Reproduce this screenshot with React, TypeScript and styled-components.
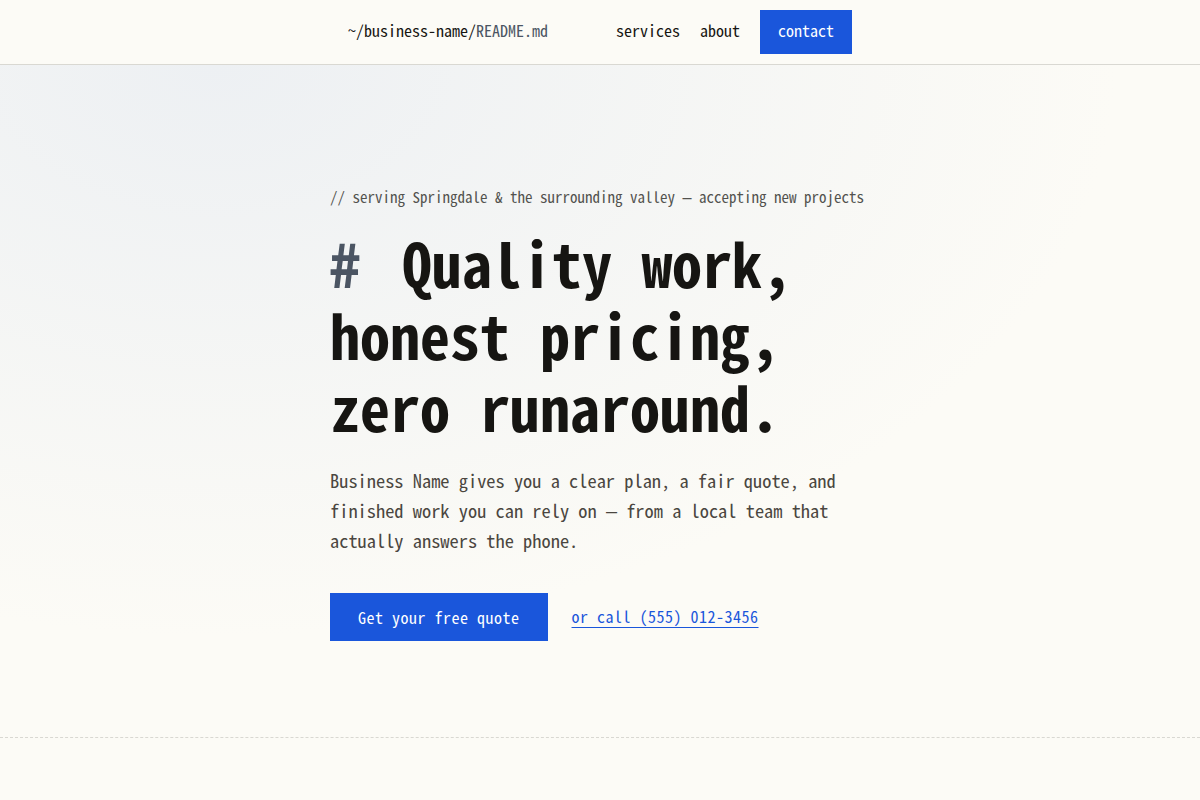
import React from 'react'
import styled, { createGlobalStyle } from 'styled-components'

const GlobalStyle = createGlobalStyle`
    * { box-sizing: border-box; }
    html, body {
        margin: 0;
        padding: 0;
        background: #fcfbf6;
        color: #161512;
        font-family: "Noto Sans Mono CJK JP", "Noto Sans Mono CJK SC", "DejaVu Sans Mono", monospace;
    }
    a { color: inherit; text-decoration: none; }
`

const App = () => {
    return (
        <Page>
            <GlobalStyle />
            <Header>
                <HeaderInner>
                    <Logo href="#">
                        ~/business-name/<LogoFile>README.md</LogoFile>
                    </Logo>
                    <Nav>
                        <NavLink href="#services">services</NavLink>
                        <NavLink href="#about">about</NavLink>
                        <ContactButton href="#contact">contact</ContactButton>
                    </Nav>
                </HeaderInner>
            </Header>
            <Hero>
                <HeroInner>
                    <Eyebrow>
                        // serving Springdale &amp; the surrounding valley <Dash>—</Dash> accepting new projects
                    </Eyebrow>
                    <Headline>
                        <Hash>#</Hash> Quality work, honest pricing, zero runaround.
                    </Headline>
                    <Lead>
                        Business Name gives you a clear plan, a fair quote, and finished work you can rely on <Dash>—</Dash> from a local team that actually answers the phone.
                    </Lead>
                    <Actions>
                        <PrimaryButton href="#contact">Get your free quote</PrimaryButton>
                        <CallLink href="tel:5550123456">or call (555) 012-3456</CallLink>
                    </Actions>
                </HeroInner>
            </Hero>
            <Divider />
            <NextSection />
        </Page>
    )
}

export default App

const Page = styled.div`
    min-height: 800px;
    background: #fcfbf6;
`

const Header = styled.header`
    height: 65px;
    border-bottom: 1px solid #d9d8d2;
    background: #fcfbf6;
`

const HeaderInner = styled.div`
    max-width: 540px;
    height: 100%;
    margin: 0 auto;
    padding: 0 18px;
    display: flex;
    align-items: center;
    justify-content: space-between;
`

const Logo = styled.a`
    font-size: 16px;
    padding-bottom: 4px;
    color: #161512;
`

const LogoFile = styled.span`
    color: #4b5563;
`

const Nav = styled.nav`
    display: flex;
    align-items: center;
    gap: 20px;
`

const NavLink = styled.a`
    font-size: 16px;
    padding-bottom: 4px;
    color: #161512;
`

const ContactButton = styled.a`
    display: inline-block;
    font-size: 16px;
    line-height: 20px;
    padding: 10px 18px 14px;
    background: #1a56db;
    color: #ffffff;
`

const Hero = styled.section`
    height: 672px;
    background:
        radial-gradient(ellipse 75% 85% at 18% 0%, #edf0f3 0%, rgba(237, 240, 243, 0.6) 40%, rgba(252, 251, 246, 0) 100%),
        #fcfbf6;
`

const HeroInner = styled.div`
    max-width: 540px;
    margin: 0 auto;
    padding-top: 122px;
`

const Eyebrow = styled.p`
    margin: 0;
    font-size: 15px;
    line-height: 20px;
    color: #52524e;
`

// the CJK mono face draws a full-width dash; this keeps it one cell wide
const Dash = styled.span`
    font-family: "DejaVu Sans Mono", monospace;
    line-height: 0;
`

const Headline = styled.h1`
    margin: 19px 0 0;
    font-size: 60px;
    line-height: 72px;
    font-weight: 700;
    color: #161512;
`

const Hash = styled.span`
    color: #4b5563;
    margin-right: 12px;
`

const Lead = styled.p`
    margin: 23px 0 0;
    font-size: 18.4px;
    line-height: 30px;
    color: #4a4640;
`

const Actions = styled.div`
    margin-top: 38px;
    display: flex;
    align-items: center;
    gap: 24px;
`

const PrimaryButton = styled.a`
    display: inline-block;
    font-size: 16px;
    line-height: 20px;
    letter-spacing: 0.5px;
    padding: 14px 28px;
    background: #1a56db;
    color: #ffffff;
`

const CallLink = styled.a`
    font-size: 16px;
    letter-spacing: 0.5px;
    padding-bottom: 3px;
    color: #1a56db;
    text-decoration: underline;
    text-underline-offset: 4px;
`

const Divider = styled.hr`
    margin: 0;
    border: none;
    border-top: 1px dashed #d9d8d2;
`

const NextSection = styled.section`
    height: 62px;
`
